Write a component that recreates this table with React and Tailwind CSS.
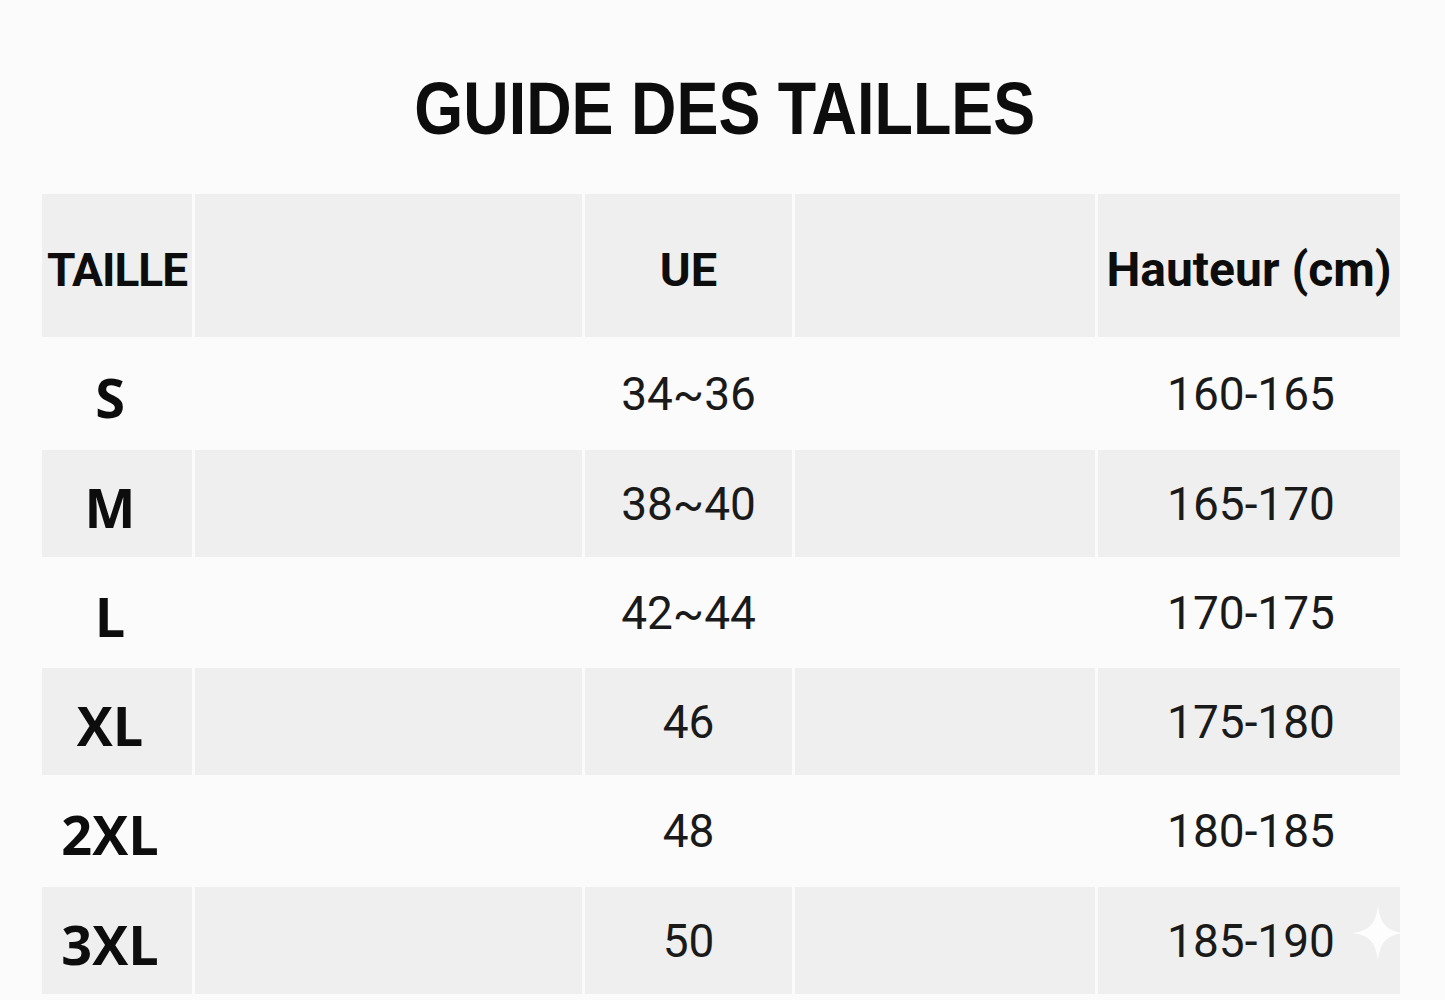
import React from "react";

const rows = [
  { size: "S", eu: "34~36", h: "160-165", gray: false, height: "h-[113px]" },
  { size: "M", eu: "38~40", h: "165-170", gray: true, height: "h-[107px]" },
  { size: "L", eu: "42~44", h: "170-175", gray: false, height: "h-[111px]" },
  { size: "XL", eu: "46", h: "175-180", gray: true, height: "h-[107px]" },
  { size: "2XL", eu: "48", h: "180-185", gray: false, height: "h-[112px]" },
  { size: "3XL", eu: "50", h: "185-190", gray: true, height: "h-[107px]", star: true },
];

function Sparkle() {
  return (
    <svg
      className="absolute right-[-4px] top-[18px]"
      width="52"
      height="56"
      viewBox="0 0 52 56"
    >
      <path
        d="M26 0 C28 18 34 26 52 28 C34 30 28 38 26 56 C24 38 18 30 0 28 C18 26 24 18 26 0 Z"
        fill="#ffffff"
        opacity="0.85"
      />
    </svg>
  );
}

export default function App() {
  const cell = (gray) => (gray ? "bg-[#efefef]" : "");
  return (
    <div className="w-[1445px] h-[1000px] bg-[#fbfbfb] overflow-hidden">
      <div className="pt-[72px] h-[146px] flex justify-center">
        <h1
          className="inline-block leading-none text-[74px] font-bold text-[#0d0d0d] scale-x-[0.85] pl-[6px]"
          style={{ fontFamily: '"Liberation Sans", Arial, sans-serif' }}
        >
          GUIDE DES TAILLES
        </h1>
      </div>

      <div className="mt-[48px] mx-[42px] w-[1358px] flex flex-col">
        {/* header */}
        <div
          className="grid grid-cols-[150px_387px_207px_300px_302px] gap-x-[3px] h-[143px] text-[#0d0d0d]"
          style={{ fontFamily: "Roboto, sans-serif" }}
        >
          <div className="bg-[#efefef] flex items-center justify-center pt-[8px]">
            <span className="text-[46px] font-bold tracking-[-1px] leading-none">TAILLE</span>
          </div>
          <div className="bg-[#efefef]" />
          <div className="bg-[#efefef] flex items-center justify-center pt-[8px]">
            <span className="text-[47px] font-bold leading-none">UE</span>
          </div>
          <div className="bg-[#efefef]" />
          <div className="bg-[#efefef] flex items-center justify-center pt-[8px]">
            <span className="text-[48px] font-bold leading-none">Hauteur (cm)</span>
          </div>
        </div>

        {rows.map((r) => (
          <div
            key={r.size}
            className={`grid grid-cols-[150px_387px_207px_300px_302px] gap-x-[3px] ${r.height}`}
          >
            <div className={`${cell(r.gray)} flex items-center justify-center pr-[14px] pt-[6px]`}>
              <span
                className="text-[54px] font-bold leading-none text-[#0d0d0d]"
                style={{ fontFamily: '"Open Sans", "Noto Sans", sans-serif' }}
              >
                {r.size}
              </span>
            </div>
            <div className={cell(r.gray)} />
            <div className={`${cell(r.gray)} flex items-center justify-center`}>
              <span
                className="text-[46px] leading-none text-[#1a1a1a]"
                style={{ fontFamily: "Roboto, sans-serif" }}
              >
                {r.eu}
              </span>
            </div>
            <div className={cell(r.gray)} />
            <div className={`${cell(r.gray)} relative flex items-center justify-center pl-[4px]`}>
              <span
                className="text-[46px] leading-none text-[#1a1a1a]"
                style={{ fontFamily: "Roboto, sans-serif" }}
              >
                {r.h}
              </span>
              {r.star && <Sparkle />}
            </div>
          </div>
        ))}
      </div>
    </div>
  );
}
